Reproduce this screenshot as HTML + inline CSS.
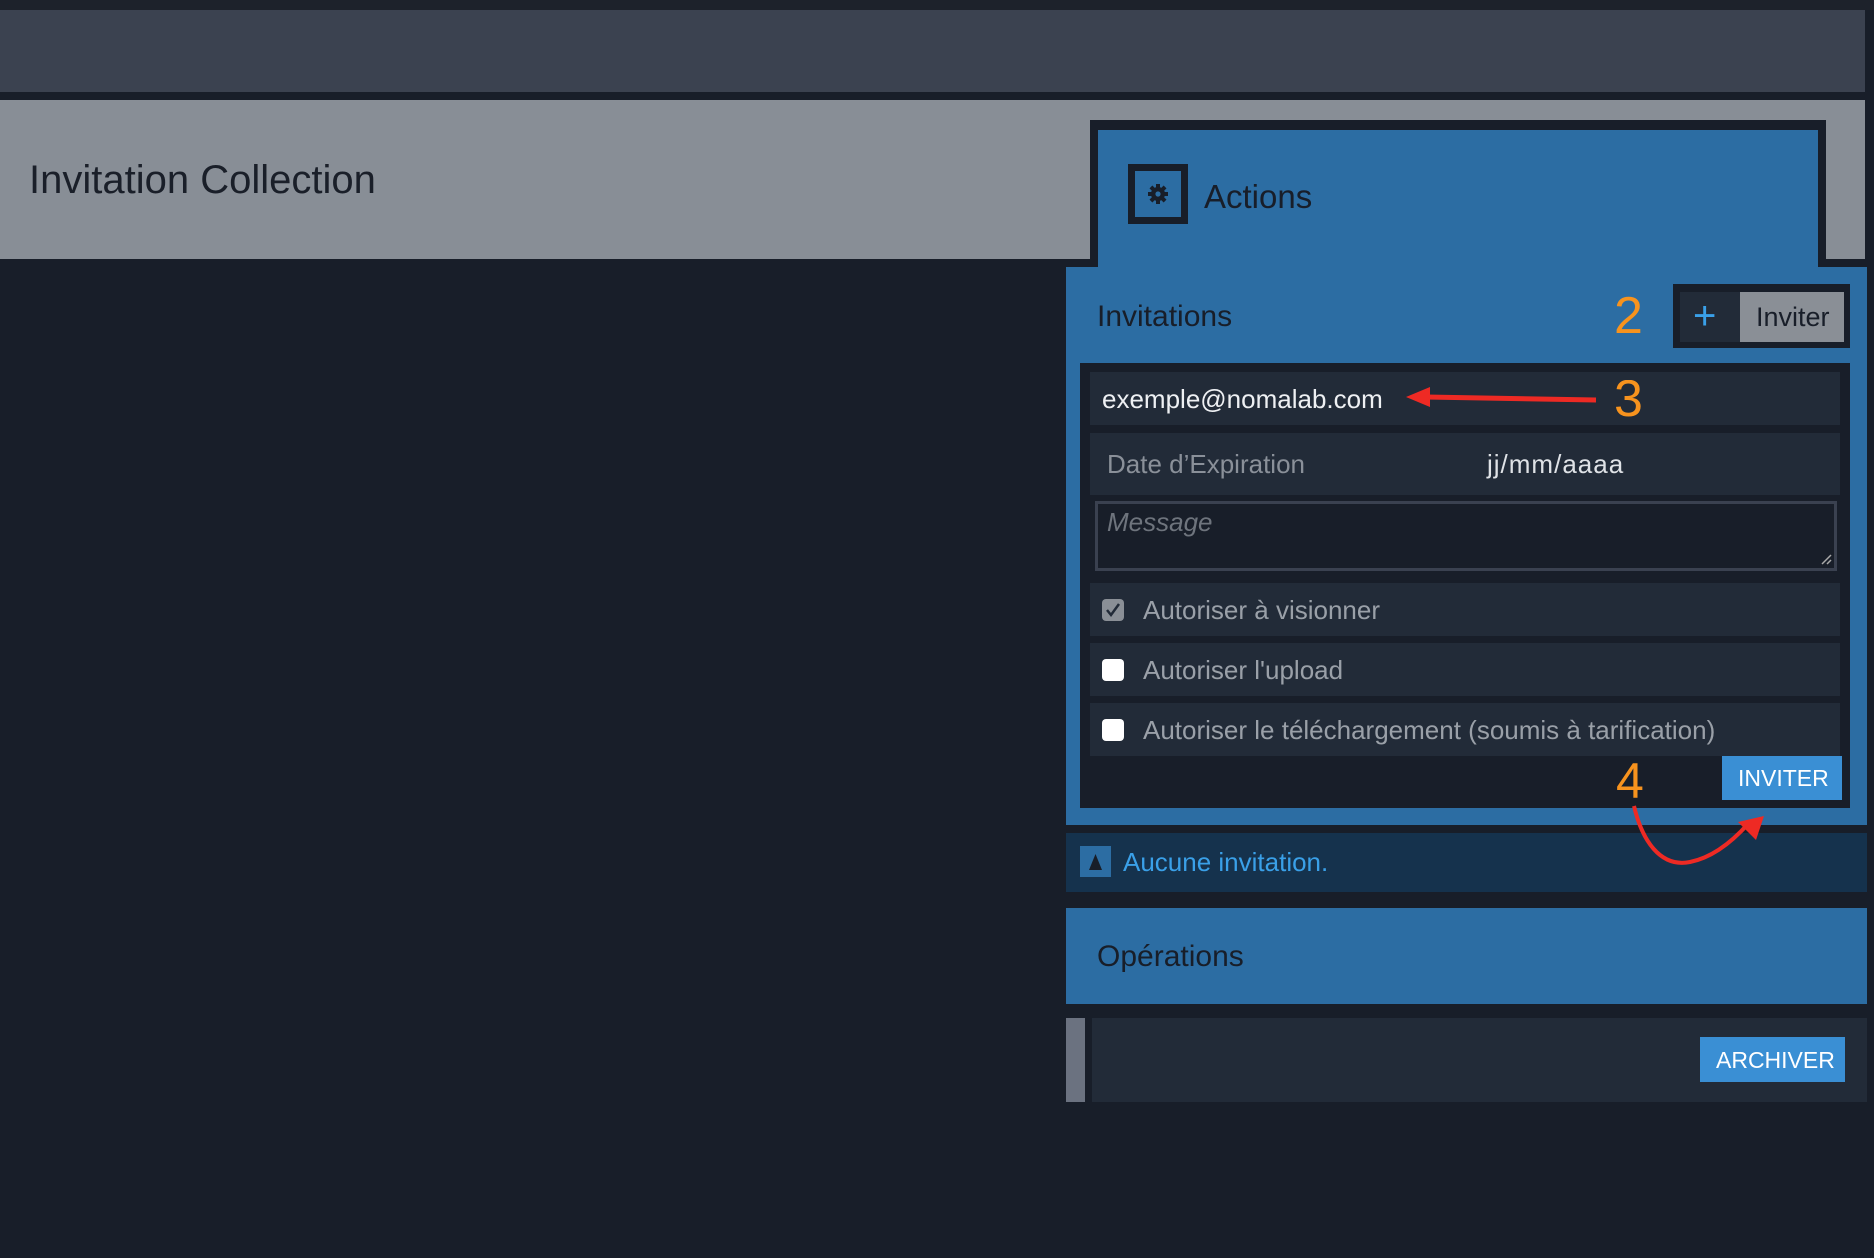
<!DOCTYPE html>
<html><head><meta charset="utf-8"><style>
*{margin:0;padding:0;box-sizing:border-box}
body{width:1874px;height:1258px;background:#181e29;position:relative;overflow:hidden;font-family:"Liberation Sans",sans-serif}
.a{position:absolute}
.t{position:absolute;white-space:nowrap;line-height:1}
</style></head><body>
<div class="a" style="left:0;top:0;width:1874px;height:10px;background:#1d222b"></div>
<div class="a" style="left:0;top:10px;width:1865px;height:82px;background:#3b4250"></div>
<div class="a" style="left:0;top:100px;width:1865px;height:159px;background:#888e96"></div>
<div class="t" style="left:29px;top:160px;font-size:40px;color:#1a1f29">Invitation Collection</div>

<!-- actions tab -->
<div class="a" style="left:1090px;top:120px;width:736px;height:150px;background:#181e29"></div>
<div class="a" style="left:1066px;top:259px;width:801px;height:8px;background:#181e29"></div>
<div class="a" style="left:1098px;top:130px;width:720px;height:145px;background:#2c6da3"></div>
<div class="a" style="left:1066px;top:267px;width:801px;height:558px;background:#2c6da3"></div>
<div class="a" style="left:1128px;top:164px;width:60px;height:60px;border:7px solid #181e29"></div>
<svg class="a" style="left:1146px;top:182px" width="24" height="24" viewBox="0 0 24 24"><g fill="#181e29"><circle cx="12" cy="12" r="7"/><g id="g"><rect x="10" y="2" width="4" height="20"/></g><use href="#g" transform="rotate(45 12 12)"/><use href="#g" transform="rotate(90 12 12)"/><use href="#g" transform="rotate(135 12 12)"/></g><circle cx="12" cy="12" r="2.6" fill="#2c6da3"/></svg>
<div class="t" style="left:1204px;top:180px;font-size:33px;color:#181e29">Actions</div>

<div class="t" style="left:1097px;top:302px;font-size:30px;color:#181e29">Invitations</div>
<div class="t" style="left:1614px;top:290px;font-size:52px;color:#f7931e">2</div>
<div class="a" style="left:1673px;top:284px;width:177px;height:64px;background:#181e29"></div>
<div class="a" style="left:1680px;top:292px;width:60px;height:50px;background:#222b38"></div>
<div class="t" style="left:1693px;top:296px;font-size:40px;color:#3aa0e8">+</div>
<div class="a" style="left:1740px;top:292px;width:104px;height:50px;background:#8a8f96"></div>
<div class="t" style="left:1756px;top:304px;font-size:27px;color:#181e29">Inviter</div>

<div class="a" style="left:1080px;top:363px;width:770px;height:445px;background:#181e29"></div>
<div class="a" style="left:1090px;top:372px;width:750px;height:53px;background:#222b38"></div>
<div class="t" style="left:1102px;top:386px;font-size:26px;color:#eef0f3">exemple@nomalab.com</div>
<svg class="a" style="left:1400px;top:380px" width="280" height="40"><path d="M196 20 L26 17" stroke="#ee2a24" stroke-width="5"/><path d="M6 17 L30 7 L30 27 Z" fill="#ee2a24"/><text x="214" y="36" font-family="Liberation Sans" font-size="52" fill="#f7931e">3</text></svg>

<div class="a" style="left:1090px;top:433px;width:750px;height:62px;background:#222b38"></div>
<div class="t" style="left:1107px;top:451px;font-size:26px;color:#8a9099">Date d’Expiration</div>
<div class="t" style="left:1487px;top:451px;font-size:26px;color:#dfe2e6;letter-spacing:1px">jj/mm/aaaa</div>
<div class="a" style="left:1095px;top:501px;width:742px;height:70px;border:3px solid #3a4150;background:#181e29"></div>
<div class="t" style="left:1107px;top:509px;font-size:26px;color:#6e747d;font-style:italic">Message</div>
<svg class="a" style="left:1820px;top:553px" width="12" height="12"><path d="M2 11 L11 2 M7 11 L11 7" stroke="#aaa" stroke-width="1.5"/></svg>

<div class="a" style="left:1090px;top:583px;width:750px;height:53px;background:#222b38"></div>
<div class="a" style="left:1102px;top:599px;width:22px;height:22px;border-radius:4px;background:#8a8f96"></div>
<svg class="a" style="left:1102px;top:599px" width="22" height="22"><path d="M5 11 L9 16 L17 5" stroke="#222b38" stroke-width="2.5" fill="none"/></svg>
<div class="t" style="left:1143px;top:597px;font-size:26px;color:#9aa0a8">Autoriser à visionner</div>
<div class="a" style="left:1090px;top:643px;width:750px;height:53px;background:#222b38"></div>
<div class="a" style="left:1102px;top:659px;width:22px;height:22px;border-radius:4px;background:#fff"></div>
<div class="t" style="left:1143px;top:657px;font-size:26px;color:#9aa0a8">Autoriser l'upload</div>
<div class="a" style="left:1090px;top:703px;width:750px;height:53px;background:#222b38"></div>
<div class="a" style="left:1102px;top:719px;width:22px;height:22px;border-radius:4px;background:#fff"></div>
<div class="t" style="left:1143px;top:717px;font-size:26px;color:#9aa0a8">Autoriser le téléchargement (soumis à tarification)</div>
<div class="a" style="left:1722px;top:756px;width:120px;height:44px;background:#3a8fd4"></div>
<div class="t" style="left:1738px;top:767px;font-size:23px;color:#fff">INVITER</div>
<div class="t" style="left:1616px;top:756px;font-size:50px;color:#f7931e">4</div>

<div class="a" style="left:1066px;top:833px;width:801px;height:59px;background:#15324d"></div>
<div class="a" style="left:1080px;top:846px;width:31px;height:31px;background:#2c6da3"></div>
<svg class="a" style="left:1080px;top:846px" width="31" height="31"><path d="M15.5 8 L22 24 L9 24 Z" fill="#181e29"/></svg>
<div class="t" style="left:1123px;top:849px;font-size:26px;color:#3aa0e8">Aucune invitation.</div>
<svg class="a" style="left:1620px;top:800px" width="150" height="70"><path d="M14 6 C22 40 40 68 70 62 C90 58 110 44 128 24" stroke="#ee2a24" stroke-width="4" fill="none"/><path d="M144 16 L118 22 L136 40 Z" fill="#ee2a24"/></svg>

<div class="a" style="left:1066px;top:908px;width:801px;height:96px;background:#2c6da3"></div>
<div class="t" style="left:1097px;top:942px;font-size:30px;color:#181e29">Opérations</div>
<div class="a" style="left:1066px;top:1018px;width:19px;height:84px;background:#6b7280"></div>
<div class="a" style="left:1092px;top:1018px;width:775px;height:84px;background:#222b38"></div>
<div class="a" style="left:1700px;top:1037px;width:145px;height:45px;background:#3a8fd4"></div>
<div class="t" style="left:1716px;top:1049px;font-size:23px;color:#fff">ARCHIVER</div>
</body></html>
